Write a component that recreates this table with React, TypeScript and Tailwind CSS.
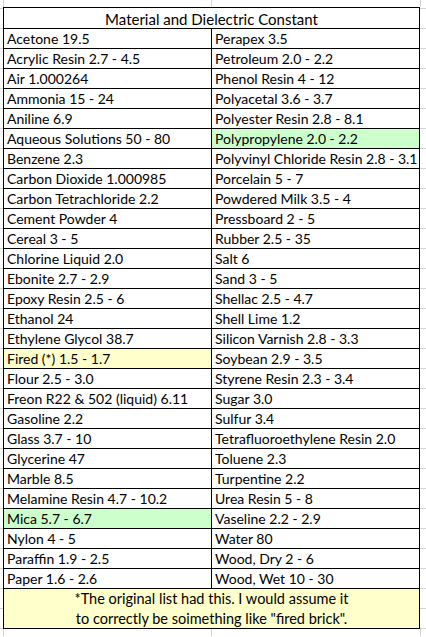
import React from "react";

const left: [string, string?][] = [
  ["Acetone 19.5"],
  ["Acrylic Resin 2.7 - 4.5"],
  ["Air 1.000264"],
  ["Ammonia 15 - 24"],
  ["Aniline 6.9"],
  ["Aqueous Solutions 50 - 80"],
  ["Benzene 2.3"],
  ["Carbon Dioxide 1.000985"],
  ["Carbon Tetrachloride 2.2"],
  ["Cement Powder 4"],
  ["Cereal 3 - 5"],
  ["Chlorine Liquid 2.0"],
  ["Ebonite 2.7 - 2.9"],
  ["Epoxy Resin 2.5 - 6"],
  ["Ethanol 24"],
  ["Ethylene Glycol 38.7"],
  ["Fired (*) 1.5 - 1.7", "y"],
  ["Flour 2.5 - 3.0"],
  ["Freon R22 & 502 (liquid) 6.11"],
  ["Gasoline 2.2"],
  ["Glass 3.7 - 10"],
  ["Glycerine 47"],
  ["Marble 8.5"],
  ["Melamine Resin 4.7 - 10.2"],
  ["Mica 5.7 - 6.7", "g"],
  ["Nylon 4 - 5"],
  ["Paraffin 1.9 - 2.5"],
  ["Paper 1.6 - 2.6"],
];

const right: [string, string?][] = [
  ["Perapex 3.5"],
  ["Petroleum 2.0 - 2.2"],
  ["Phenol Resin 4 - 12"],
  ["Polyacetal 3.6 - 3.7"],
  ["Polyester Resin 2.8 - 8.1"],
  ["Polypropylene 2.0 - 2.2", "g"],
  ["Polyvinyl Chloride Resin 2.8 - 3.1"],
  ["Porcelain 5 - 7"],
  ["Powdered Milk 3.5 - 4"],
  ["Pressboard 2 - 5"],
  ["Rubber 2.5 - 35"],
  ["Salt 6"],
  ["Sand 3 - 5"],
  ["Shellac 2.5 - 4.7"],
  ["Shell Lime 1.2"],
  ["Silicon Varnish 2.8 - 3.3"],
  ["Soybean 2.9 - 3.5"],
  ["Styrene Resin 2.3 - 3.4"],
  ["Sugar 3.0"],
  ["Sulfur 3.4"],
  ["Tetrafluoroethylene Resin 2.0"],
  ["Toluene 2.3"],
  ["Turpentine 2.2"],
  ["Urea Resin 5 - 8"],
  ["Vaseline 2.2 - 2.9"],
  ["Water 80"],
  ["Wood, Dry 2 - 6"],
  ["Wood, Wet 10 - 30"],
];

function bg(c?: string) {
  if (c === "y") return "bg-[#ffffcc]";
  if (c === "g") return "bg-[#ccffcc]";
  return "bg-white";
}

function Strip() {
  return (
    <div className="flex h-[7px]">
      <div className="w-[3px]" />
      <div className="w-[208px] border-l border-[#d4d4d4]" />
      <div className="w-[210px] border-l border-r border-[#d4d4d4]" />
    </div>
  );
}

export default function App() {
  const cells: React.ReactNode[] = [];
  left.forEach((l, i) => {
    const r = right[i];
    cells.push(
      <div
        key={"l" + i}
        className={`h-[20px] border-b border-r border-black pl-[3px] text-[14px] leading-[19px] whitespace-nowrap overflow-hidden ${bg(l[1])}`}
      >
        {l[0]}
      </div>
    );
    cells.push(
      <div
        key={"r" + i}
        className={`h-[20px] border-b border-black pl-[3px] text-[14px] leading-[19px] whitespace-nowrap overflow-hidden ${bg(r[1])}`}
      >
        {r[0]}
      </div>
    );
  });

  return (
    <div className="min-h-[637px] w-full bg-white bg-[image:repeating-linear-gradient(to_bottom,transparent_0px,transparent_8px,#d4d4d4_8px,#d4d4d4_9px,transparent_9px,transparent_20px)] font-[Lato,sans-serif] text-black">
      <Strip />
      <div className="ml-[3px] w-[417px] border border-black bg-white">
        <div className="h-[21px] border-b border-black text-center text-[15px] leading-[20px] pt-[1px]">
          Material and Dielectric Constant
        </div>
        <div className="grid grid-cols-[208px_207px]">{cells}</div>
        <div className="h-[39px] bg-[#ffffcc] text-center text-[14.5px] leading-[20px]">
          <div>*The original list had this. I would assume it</div>
          <div>to correctly be soimething like "fired brick".</div>
        </div>
      </div>
      <Strip />
    </div>
  );
}
